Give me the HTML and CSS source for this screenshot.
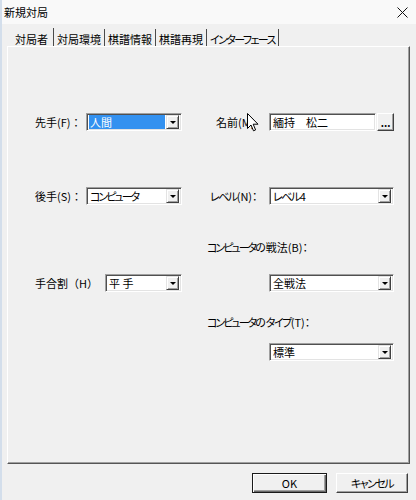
FILE: index.html
```html
<!DOCTYPE html>
<html lang="ja">
<head>
<meta charset="utf-8">
<title>新規対局</title>
<link rel="stylesheet" href="styles.css">
</head>
<body>
<div class="window">
  <div class="titlebar">
    <span class="title">新規対局</span>
    <svg class="close" width="11" height="11" viewBox="0 0 11 11"><path d="M0.5 0.5 L10.5 10.5 M10.5 0.5 L0.5 10.5" stroke="#111" stroke-width="1" fill="none"/></svg>
  </div>
  <div class="tabs">
    <div class="tab sel">対局者</div>
    <div class="tab">対局環境</div>
    <div class="tab">棋譜情報</div>
    <div class="tab">棋譜再現</div>
    <div class="tab palt tight">インターフェース</div>
  </div>
  <div class="panel">
    <div class="col left">
      <div class="row">
        <span class="lbl">先手(F)：</span>
        <div class="combo w96"><span class="val hl">人間</span><span class="arrow"><i></i></span></div>
      </div>
      <div class="row rb">
        <span class="lbl">後手(S)：</span>
        <div class="combo w96"><span class="val palt kn2">コンピュータ</span><span class="arrow"><i></i></span></div>
      </div>
      <div class="row rc">
        <span class="lbl">手合割（H）</span>
        <div class="combo w77"><span class="val">平 手</span><span class="arrow"><i></i></span></div>
      </div>
    </div>
    <div class="col right">
      <div class="row">
        <span class="lbl name">名前(M)</span>
        <div class="namebox">
          <div class="edit"><span class="val">緬持　松二</span></div>
          <div class="dots">...</div>
        </div>
      </div>
      <div class="row rb">
        <span class="lbl lv palt"><span class="kn">レベル</span>(N)：</span>
        <div class="combo w125"><span class="val palt kn">レベル4</span><span class="arrow"><i></i></span></div>
      </div>
      <div class="plabel palt l1"><span class="kn2">コンピュータ</span>の戦法(B)：</div>
      <div class="row end r3">
        <div class="combo w125"><span class="val">全戦法</span><span class="arrow"><i></i></span></div>
      </div>
      <div class="plabel palt l2"><span class="kn2">コンピュータ</span>の<span class="kn">タイプ</span>(T)：</div>
      <div class="row end r4">
        <div class="combo w125"><span class="val">標準</span><span class="arrow"><i></i></span></div>
      </div>
    </div>
  </div>
  <div class="buttons">
    <button class="btn default">OK</button>
    <button class="btn cancel palt kn">キャンセル</button>
  </div>
  <svg class="cursor" width="12" height="19" viewBox="0 0 12 19"><path d="M0.5 0.5 L0.5 15.5 L4 12 L6.5 17.8 L8.6 16.9 L6.2 11.2 L11 11.2 Z" fill="#fff" stroke="#000" stroke-width="1" stroke-linejoin="round"/></svg>
</div>
</body>
</html>
```
FILE: styles.css
```css
* { box-sizing: border-box; }
html, body { margin: 0; padding: 0; }
body {
  background: #f0f0f0;
  font-family: "Noto Sans CJK JP", "Noto Sans", sans-serif;
  font-size: 11px;
  color: #000;
}
.window {
  position: relative;
  width: 416px;
  height: 500px;
  background: #f0f0f0;
  border-left: 2px solid #d3deeb;
  overflow: hidden;
}
.titlebar {
  height: 24px;
  display: flex;
  align-items: center;
  padding-left: 2px;
  background: #f9f9f9;
}
.title { line-height: 14px; }
.close { margin-left: auto; margin-right: 8px; }
.tabs {
  display: flex;
  align-items: flex-end;
  height: 22px;
  padding-left: 7px;
}
.tab {
  height: 17px;
  line-height: 14px;
  padding: 3px 3px 0;
  border-right: 1px solid #4a4a4a;
  white-space: nowrap;
}
.tab.sel {
  height: 18px;
  padding: 4px 5px 0 6px;
}
.palt { font-feature-settings: "palt"; }
.tight { letter-spacing: -1.6px; }
.kn { letter-spacing: -1.5px; }
.kn2 { letter-spacing: -2px; }
.panel {
  margin-left: 5px;
  width: 403px;
  height: 418px;
  border-top: 1px solid #fff;
  border-left: 1px solid #fff;
  border-right: 1px solid #555;
  border-bottom: 1px solid #555;
  box-shadow: inset -1px -1px 0 #a0a0a0;
  display: flex;
  align-items: flex-start;
}
.col { display: flex; flex-direction: column; margin-top: 66px; }
.col.left { margin-left: 27px; width: 147px; }
.col.right { margin-left: 25px; width: 187px; }
.row {
  display: flex;
  align-items: center;
  justify-content: space-between;
  height: 18px;
}
.row.end { justify-content: flex-end; }
.rb { margin-top: 56px; }
.left .rc { margin-top: 69px; }
.lbl { line-height: 14px; white-space: nowrap; }
.lbl.name { margin-left: 9px; }
.lbl.lv { margin-left: 3px; }
.plabel { line-height: 14px; height: 14px; white-space: nowrap; }
.l1 { margin-top: 35px; }
.r3 { margin-top: 20px; }
.l2 { margin-top: 23px; }
.r4 { margin-top: 14px; }

.combo, .edit {
  display: flex;
  align-items: center;
  height: 18px;
  background: #fff;
  border-top: 1px solid #a0a0a0;
  border-left: 1px solid #a0a0a0;
  border-right: 1px solid #fff;
  border-bottom: 1px solid #fff;
  box-shadow: inset 1px 1px 0 #505050, inset -1px -1px 0 #e3e3e3;
  padding: 2px;
}
.w96 { width: 96px; }
.w77 { width: 77px; }
.w125 { width: 125px; }
.val {
  flex: 1;
  height: 14px;
  line-height: 14px;
  padding-left: 1px;
  white-space: nowrap;
  overflow: hidden;
}
.val.hl {
  background: #3391f0;
  color: #fff;
  margin-right: 1px;
}
.arrow {
  width: 13px;
  height: 14px;
  background: #f0f0f0;
  border-top: 1px solid #e3e3e3;
  border-left: 1px solid #e3e3e3;
  border-right: 1px solid #404040;
  border-bottom: 1px solid #404040;
  box-shadow: inset 1px 1px 0 #fff, inset -1px -1px 0 #a0a0a0;
  display: flex;
  align-items: center;
  justify-content: center;
}
.arrow i {
  width: 0;
  height: 0;
  border-left: 3px solid transparent;
  border-right: 3px solid transparent;
  border-top: 3px solid #000;
  margin-top: 1px;
}
.namebox { display: flex; gap: 1px; width: 125px; }
.edit { width: 107px; }
.dots {
  width: 17px;
  height: 18px;
  background: #f0f0f0;
  border-top: 1px solid #fff;
  border-left: 1px solid #fff;
  border-right: 1px solid #404040;
  border-bottom: 1px solid #404040;
  box-shadow: inset -1px -1px 0 #a0a0a0;
  font-size: 10px;
  line-height: 18px;
  text-align: center;
  font-weight: bold;
}
.buttons {
  display: flex;
  justify-content: flex-end;
  gap: 9px;
  margin-top: 9px;
  padding-right: 8px;
}
.btn {
  height: 20px;
  font-family: inherit;
  font-size: 11px;
  line-height: 14px;
  padding: 0;
  color: #000;
  background: #f0f0f0;
  border-top: 1px solid #fff;
  border-left: 1px solid #fff;
  border-right: 1px solid #404040;
  border-bottom: 1px solid #404040;
  box-shadow: inset -1px -1px 0 #a0a0a0;
}
.btn.default {
  width: 75px;
  border: 1px solid #1a1a1a;
  box-shadow: inset 1px 1px 0 #fff, inset -1px -1px 0 #696969, inset -2px -2px 0 #a0a0a0;
}
.btn.cancel { width: 72px; }
.cursor { position: absolute; left: 245px; top: 113px; }
```
